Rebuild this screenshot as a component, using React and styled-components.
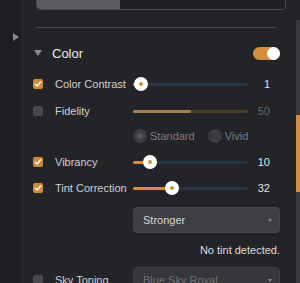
import styled, { createGlobalStyle } from 'styled-components';

const GlobalStyle = createGlobalStyle`
  html, body {
    margin: 0;
    padding: 0;
    background: #232428;
    overflow: hidden;
  }
  * {
    box-sizing: border-box;
  }
`;

const ORANGE = '#d58f3c';

const App = () => {
  return (
    <Frame>
      <GlobalStyle />
      <SideStrip>
        <RightArrow />
      </SideStrip>
      <Panel>
        <Segmented>
          <Segment $active />
          <Segment />
        </Segmented>
        <Separator />
        <Content>
          <Header>
            <HeaderTitle>
              <DownArrow />
              <span>Color</span>
            </HeaderTitle>
            <Toggle>
              <Knob />
            </Toggle>
          </Header>

          <SliderRow label="Color Contrast" value={1} checked />
          <SliderRow label="Fidelity" value={50} disabled $top={1} />

          <RadioRow>
            <Radio>
              <RadioDot />
              <span>Standard</span>
            </Radio>
            <Radio>
              <RadioDot $empty />
              <span>Vivid</span>
            </Radio>
          </RadioRow>

          <SliderRow label="Vibrancy" value={10} checked $top={1} />
          <SliderRow label="Tint Correction" value={32} checked />

          <DropRow $top={6}>
            <Select>
              <span>Stronger</span>
              <Caret />
            </Select>
          </DropRow>

          <Note>No tint detected.</Note>

          <Row $top={10}>
            <LabelCell>
              <Checkbox />
              <Label>Sky Toning</Label>
            </LabelCell>
            <Select $dim $wide>
              <span>Blue Sky Royal</span>
              <Caret />
            </Select>
          </Row>
        </Content>
      </Panel>
      <Scrollbar>
        <Track>
          <Thumb />
        </Track>
      </Scrollbar>
    </Frame>
  );
};

const SliderRow = ({ label, value, checked, disabled, $top }) => {
  const pos = 7 + value * 1.01;
  return (
    <Row $top={$top}>
      <LabelCell>
        <Checkbox $checked={checked}>
          {checked && (
            <svg width="8" height="8" viewBox="0 0 8 8">
              <path d="M1.3 4.2 L3.2 6 L6.8 1.8" fill="none" stroke="#fff" strokeWidth="1.4" strokeLinecap="round" strokeLinejoin="round" />
            </svg>
          )}
        </Checkbox>
        <Label>{label}</Label>
      </LabelCell>
      <SliderTrack $disabled={disabled}>
        <SliderFill $disabled={disabled} style={{ width: pos }} />
        {!disabled && (
          <SliderThumb style={{ left: pos - 7 }}>
            <ThumbDot />
          </SliderThumb>
        )}
      </SliderTrack>
      <Value $disabled={disabled}>{value}</Value>
    </Row>
  );
};

const Frame = styled.div`
  width: 300px;
  height: 283px;
  display: flex;
  background: #232428;
  font-family: 'Liberation Sans', Arial, sans-serif;
  overflow: hidden;
`;

const SideStrip = styled.div`
  width: 23px;
  flex-shrink: 0;
  background: #1d1e22;
  border-right: 1px solid #2b2c30;
  padding: 33px 0 0 13px;
`;

const RightArrow = styled.div`
  width: 0;
  height: 0;
  border-top: 4px solid transparent;
  border-bottom: 4px solid transparent;
  border-left: 6px solid #85868a;
`;

const Panel = styled.div`
  flex: 1;
  display: flex;
  flex-direction: column;
  padding-left: 10px;
  & > * {
    flex-shrink: 0;
  }
`;

const Segmented = styled.div`
  display: flex;
  height: 10px;
  margin: 0 10px 0 3px;
  border: 1px solid #4a4b50;
  border-top: none;
  border-radius: 0 0 5px 5px;
  overflow: hidden;
`;

const Segment = styled.div`
  flex: ${(p) => (p.$active ? '0 0 83px' : '1')};
  background: ${(p) => (p.$active ? '#5c5d62' : '#1f2024')};
`;

const Separator = styled.div`
  height: 1px;
  margin: 17px 0 0 2px;
  width: 242px;
  background: #46474b;
`;

const Content = styled.div`
  display: flex;
  flex-direction: column;
  padding: 12px 16px 0 0;
  & > * {
    flex-shrink: 0;
  }
`;

const Header = styled.div`
  height: 26px;
  display: flex;
  align-items: center;
  justify-content: space-between;
  margin-bottom: 5px;
`;

const HeaderTitle = styled.div`
  display: flex;
  align-items: center;
  gap: 10px;
  padding-left: 1px;
  color: #ececec;
  font-size: 13px;
`;

const DownArrow = styled.div`
  width: 0;
  height: 0;
  border-left: 4px solid transparent;
  border-right: 4px solid transparent;
  border-top: 6px solid #8a8b8f;
`;

const Toggle = styled.div`
  width: 27px;
  height: 13px;
  border-radius: 7px;
  background: ${ORANGE};
  display: flex;
  justify-content: flex-end;
`;

const Knob = styled.div`
  width: 13px;
  height: 13px;
  border-radius: 50%;
  background: #fff;
`;

const Row = styled.div`
  display: grid;
  grid-template-columns: 100px 115px 22px;
  align-items: center;
  height: 26px;
  margin-top: ${(p) => p.$top || 0}px;
`;

const LabelCell = styled.div`
  display: flex;
  align-items: center;
  gap: 12px;
`;

const Checkbox = styled.div`
  width: 10px;
  height: 10px;
  border-radius: 2px;
  background: ${(p) => (p.$checked ? '#d08a36' : '#48494d')};
  display: flex;
  align-items: center;
  justify-content: center;
`;

const Label = styled.span`
  font-size: 11px;
  color: #cfcfd1;
  white-space: nowrap;
`;

const SliderTrack = styled.div`
  position: relative;
  height: 3px;
  border-radius: 2px;
  background: ${(p) => (p.$disabled ? '#4a3c2b' : '#273646')};
`;

const SliderFill = styled.div`
  height: 3px;
  border-radius: 2px;
  background: ${(p) => (p.$disabled ? '#a27f52' : ORANGE)};
`;

const SliderThumb = styled.div`
  position: absolute;
  top: -5.5px;
  width: 14px;
  height: 14px;
  border-radius: 50%;
  background: #fff;
  display: flex;
  align-items: center;
  justify-content: center;
`;

const ThumbDot = styled.div`
  width: 4px;
  height: 4px;
  border-radius: 50%;
  background: ${ORANGE};
`;

const Value = styled.span`
  text-align: right;
  font-size: 11px;
  color: ${(p) => (p.$disabled ? '#67686c' : '#e2e2e4')};
`;

const RadioRow = styled.div`
  height: 24px;
  display: flex;
  align-items: center;
  gap: 13px;
  padding-left: 100px;
`;

const Radio = styled.div`
  display: flex;
  align-items: center;
  gap: 3px;
  font-size: 11px;
  color: #7b7c80;
`;

const RadioDot = styled.div`
  width: 14px;
  height: 14px;
  border-radius: 50%;
  background: #3b3c40;
  display: flex;
  align-items: center;
  justify-content: center;
  &::after {
    content: '';
    width: 6px;
    height: 6px;
    border-radius: 50%;
    background: ${(p) => (p.$empty ? 'transparent' : '#54555a')};
  }
`;

const DropRow = styled.div`
  display: flex;
  padding-left: 100px;
  margin-top: ${(p) => p.$top || 0}px;
`;

const Select = styled.div`
  height: 26px;
  width: 147px;
  ${(p) => (p.$wide ? 'grid-column: 2 / span 2;' : '')}
  border-radius: 4px;
  background: ${(p) => (p.$dim ? '#36373b' : '#3e3f43')};
  border: 1px solid ${(p) => (p.$dim ? '#3f4044' : '#46474b')};
  display: flex;
  align-items: center;
  justify-content: space-between;
  padding: 0 7px 0 9px;
  font-size: 11px;
  color: ${(p) => (p.$dim ? '#707175' : '#d7d7d9')};
`;

const Caret = styled.div`
  width: 0;
  height: 0;
  border-left: 2.5px solid transparent;
  border-right: 2.5px solid transparent;
  border-top: 3px solid #85868a;
`;

const Note = styled.div`
  margin-top: 11px;
  line-height: 13px;
  text-align: right;
  font-size: 11px;
  color: #dcdcde;
`;

const Scrollbar = styled.div`
  width: 4px;
  flex-shrink: 0;
  padding-top: 20px;
`;

const Track = styled.div`
  height: 100%;
  background: #37383c;
  padding-top: 95px;
`;

const Thumb = styled.div`
  height: 77px;
  background: ${ORANGE};
`;

export default App;
